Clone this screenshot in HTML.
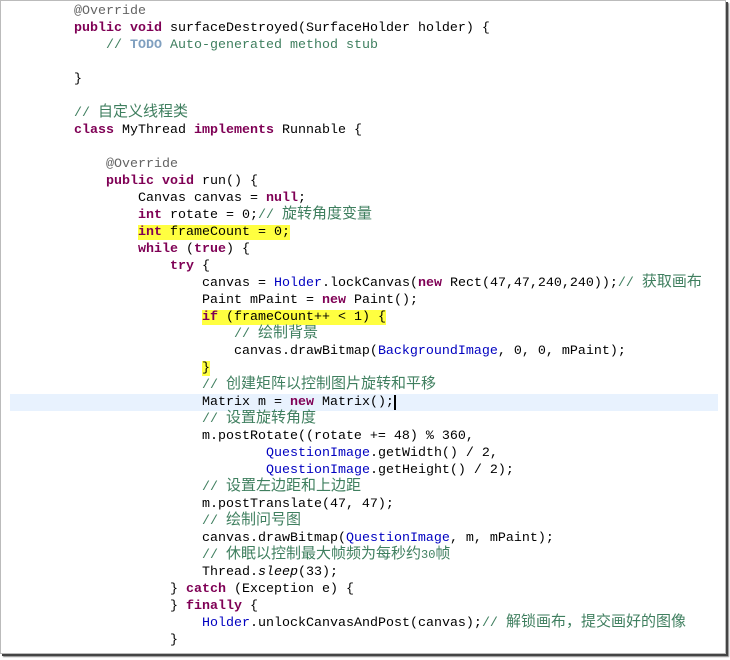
<!DOCTYPE html>
<html><head><meta charset="utf-8"><style>
html,body{margin:0;padding:0;background:#fff;width:730px;height:660px;overflow:hidden}
.box{position:absolute;left:0;top:0;width:724px;height:652px;border:1px solid #bbb;box-shadow:2px 2px 0 #444,3px 3px 1px #888;background:#fff}
.cur{position:absolute;left:10px;top:394px;width:708px;height:17px;background:#e8f2fe}
pre{position:absolute;left:74px;top:3px;margin:0;font-family:"Liberation Mono","Noto Sans CJK SC",monospace;font-size:13.33px;line-height:17px;color:#000}
.k{color:#7f0055;font-weight:bold}
.c{color:#3f7f5f}
.z{font-family:"Noto Sans CJK SC","WenQuanYi Zen Hei",sans-serif;font-size:15px;line-height:0}
.t{color:#7f9fbf;font-weight:bold}
.f{color:#0000c0}
.a{color:#646464}
.h{background:#ffff40}
i{font-style:italic}
.caret{border-left:2px solid #000;margin-left:0}
</style></head><body>
<div class="box"></div>
<div class="cur"></div>
<pre><span class="a">@Override</span>
<span class="k">public</span> <span class="k">void</span> surfaceDestroyed(SurfaceHolder holder) {
    <span class="c">// <span class="t">TODO</span> Auto-generated method stub</span>

}

<span class="c">// <span class="z">自定义线程类</span></span>
<span class="k">class</span> MyThread <span class="k">implements</span> Runnable {

    <span class="a">@Override</span>
    <span class="k">public</span> <span class="k">void</span> run() {
        Canvas canvas = <span class="k">null</span>;
        <span class="k">int</span> rotate = 0;<span class="c">// <span class="z">旋转角度变量</span></span>
        <span class="h"><span class="k">int</span> frameCount = 0;</span>
        <span class="k">while</span> (<span class="k">true</span>) {
            <span class="k">try</span> {
                canvas = <span class="f">Holder</span>.lockCanvas(<span class="k">new</span> Rect(47,47,240,240));<span class="c">// <span class="z">获取画布</span></span>
                Paint mPaint = <span class="k">new</span> Paint();
                <span class="h"><span class="k">if</span> (frameCount++ &lt; 1) {</span>
                    <span class="c">// <span class="z">绘制背景</span></span>
                    canvas.drawBitmap(<span class="f">BackgroundImage</span>, 0, 0, mPaint);
                <span class="h">}</span>
                <span class="c">// <span class="z">创建矩阵以控制图片旋转和平移</span></span>
                Matrix m = <span class="k">new</span> Matrix();<span class="caret"></span>
                <span class="c">// <span class="z">设置旋转角度</span></span>
                m.postRotate((rotate += 48) % 360,
                        <span class="f">QuestionImage</span>.getWidth() / 2,
                        <span class="f">QuestionImage</span>.getHeight() / 2);
                <span class="c">// <span class="z">设置左边距和上边距</span></span>
                m.postTranslate(47, 47);
                <span class="c">// <span class="z">绘制问号图</span></span>
                canvas.drawBitmap(<span class="f">QuestionImage</span>, m, mPaint);
                <span class="c">// <span class="z">休眠以控制最大帧频为每秒约</span><span style="font-size:12px">30</span><span class="z">帧</span></span>
                Thread.<i>sleep</i>(33);
            } <span class="k">catch</span> (Exception e) {
            } <span class="k">finally</span> {
                <span class="f">Holder</span>.unlockCanvasAndPost(canvas);<span class="c">// <span class="z">解锁画布，提交画好的图像</span></span>
            }</pre>
</body></html>
